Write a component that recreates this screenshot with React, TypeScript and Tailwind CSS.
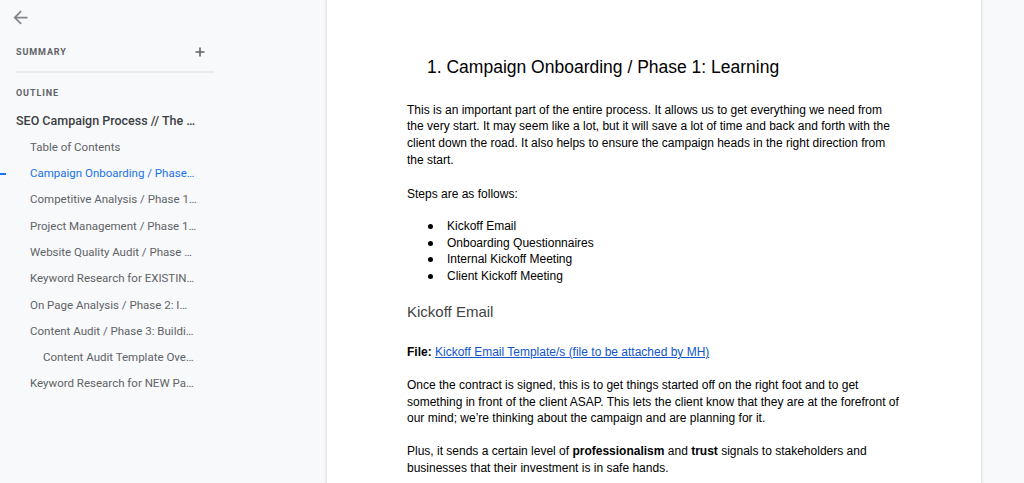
import React from "react";

const items: { label: string; indent: number; active?: boolean }[] = [
  { label: "Table of Contents", indent: 1 },
  { label: "Campaign Onboarding / Phase 1: Learning", indent: 1, active: true },
  { label: "Competitive Analysis / Phase 1: Learning", indent: 1 },
  { label: "Project Management / Phase 1: Learning", indent: 1 },
  { label: "Website Quality Audit / Phase 1: Learning", indent: 1 },
  { label: "Keyword Research for EXISTING Pages", indent: 1 },
  { label: "On Page Analysis / Phase 2: Implementation", indent: 1 },
  { label: "Content Audit / Phase 3: Building Authority", indent: 1 },
  { label: "Content Audit Template Overview", indent: 2 },
  { label: "Keyword Research for NEW Pages", indent: 1 },
];

export default function App() {
  return (
    <div className="flex h-[483px] w-[1024px] overflow-hidden bg-[#f8f9fa]">
      {/* Sidebar */}
      <div className="relative w-[327px] shrink-0 font-['Roboto',sans-serif]">
        <div className="pl-[10px] pt-[7px]">
          <svg width="21" height="21" viewBox="0 0 24 24" fill="#80868b">
            <path d="M20 11H7.83l5.59-5.59L12 4l-8 8 8 8 1.41-1.41L7.83 13H20v-2z" />
          </svg>
        </div>
        <div className="ml-[16px] mt-[18px] flex h-[12px] w-[198px] items-center justify-between">
          <span className="text-[9px] font-bold uppercase leading-none tracking-[0.9px] text-[#5f6368]">
            Summary
          </span>
          <svg width="10" height="10" viewBox="0 0 10 10" className="mr-[9px]">
            <path d="M5 0.5v9M0.5 5h9" stroke="#5f6368" strokeWidth="1.6" />
          </svg>
        </div>
        <div className="ml-[16px] mt-[13px] h-[2px] w-[198px] bg-[#e8eaed]" />
        <div className="ml-[16px] mt-[14px] flex h-[12px] items-center">
          <span className="text-[9px] font-bold uppercase leading-none tracking-[0.9px] text-[#5f6368]">
            Outline
          </span>
        </div>
        <div className="mt-[9px] w-[197px] pl-[16px]">
          <div className="flex h-[26.3px] items-center">
            <span className="truncate text-[12.5px] font-medium text-[#3c4043]">
              SEO Campaign Process // The Complete Guide
            </span>
          </div>
          {items.map((it) => (
            <div
              key={it.label}
              className={`relative flex h-[26.3px] items-center ${it.indent === 2 ? "pl-[27px]" : "pl-[14px]"}`}
            >
              {it.active && (
                <span className="absolute left-[-16px] top-[12px] h-[2px] w-[6px] bg-[#1a73e8]" />
              )}
              <span
                className={`truncate text-[11.5px] ${it.active ? "text-[#1a73e8]" : "text-[#5f6368]"}`}
              >
                {it.label}
              </span>
            </div>
          ))}
        </div>
      </div>

      {/* Page */}
      <div className="h-[483px] w-[654px] shrink-0 bg-white px-[80px] pt-[55px] font-['Liberation_Sans',Arial,sans-serif] text-black shadow-[0_0_0_1px_#e5e6e8,0_1px_3px_1px_rgba(60,64,67,0.12)]">
        <h1 className="flex pl-[20px] text-[17.5px] leading-[24px]">
          <span>1.&nbsp;</span>
          <span>Campaign Onboarding / Phase 1: Learning</span>
        </h1>
        <p className="mt-[22.6px] text-[12px] leading-[16.8px]">
          This is an important part of the entire process. It allows us to get everything we need from
          the very start. It may seem like a lot, but it will save a lot of time and back and forth with the
          client down the road. It also helps to ensure the campaign heads in the right direction from
          the start.
        </p>
        <p className="mt-[16.8px] text-[12px] leading-[16.8px]">Steps are as follows:</p>
        <ul className="mt-[15.6px] text-[12px] leading-[16.7px]">
          {["Kickoff Email", "Onboarding Questionnaires", "Internal Kickoff Meeting", "Client Kickoff Meeting"].map(
            (s) => (
              <li key={s} className="flex items-center">
                <span className="ml-[21px] h-[5px] w-[5px] rounded-full bg-black" />
                <span className="ml-[14px]">{s}</span>
              </li>
            )
          )}
        </ul>
        <h2 className="mt-[17.6px] text-[15px] leading-[20px] text-[#434343]">Kickoff Email</h2>
        <p className="mt-[22px] text-[12px] leading-[16.8px]">
          <span className="font-bold">File:</span>{" "}
          <span className="text-[#1155cc] underline">Kickoff Email Template/s (file to be attached by MH)</span>
        </p>
        <p className="mt-[15.8px] text-[12px] leading-[16.6px]">
          Once the contract is signed, this is to get things started off on the right foot and to get
          something in front of the client ASAP. This lets the client know that they are at the forefront
          of our mind; we’re thinking about the campaign and are planning for it.
        </p>
        <p className="mt-[16.4px] text-[12px] leading-[16.6px]">
          Plus, it sends a certain level of <span className="font-bold">professionalism</span> and{" "}
          <span className="font-bold">trust</span> signals to stakeholders and businesses that their
          investment is in safe hands.
        </p>
      </div>
      <div className="flex-1" />
    </div>
  );
}
